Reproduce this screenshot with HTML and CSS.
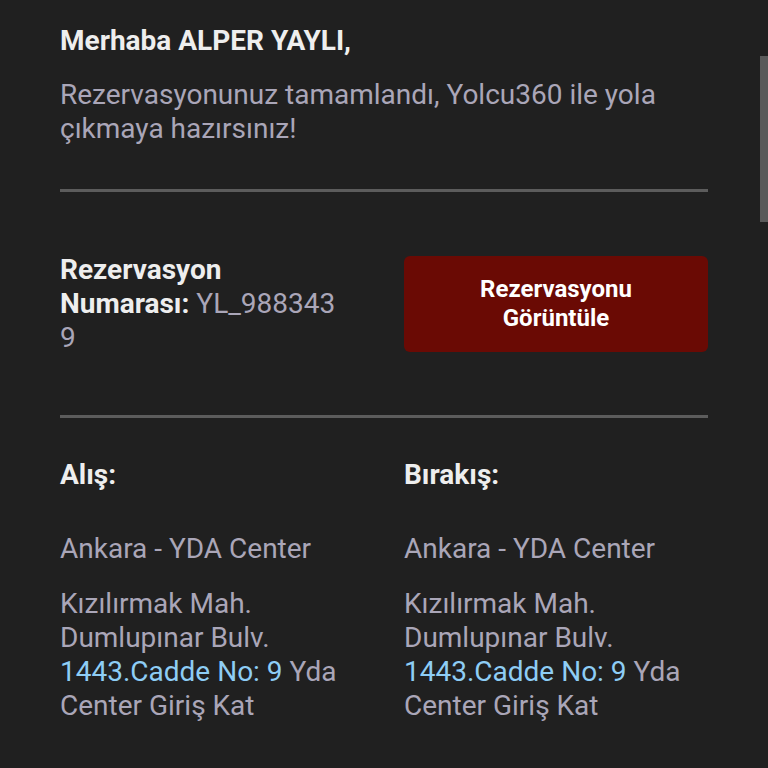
FILE: index.html
```html
<!DOCTYPE html>
<html lang="tr">

<head>
  <meta charset="UTF-8">
  <meta name="viewport" content="width=device-width, initial-scale=1.0">
  <title>Rezervasyon</title>
  <link rel="stylesheet" href="styles.css">
</head>

<body>
  <div class="scrollbar"></div>
  <div class="mail">
    <div class="greeting">
      <h1>Merhaba ALPER YAYLI,</h1>
      <p>Rezervasyonunuz tamamlandı, Yolcu360 ile yola çıkmaya hazırsınız!</p>
    </div>

    <hr class="line">

    <div class="booking">
      <div class="booking-no">
        <b>Rezervasyon Numarası:</b> <span class="code">YL_9883439</span>
      </div>
      <a class="view-btn" href="#">Rezervasyonu<br>Görüntüle</a>
    </div>

    <hr class="line">

    <div class="places">
      <div class="place">
        <h2>Alış:</h2>
        <p>Ankara - YDA Center</p>
        <p>Kızılırmak Mah. Dumlupınar Bulv. <span class="link">1443.Cadde No: 9</span> Yda Center Giriş Kat</p>
      </div>
      <div class="place">
        <h2>Bırakış:</h2>
        <p>Ankara - YDA Center</p>
        <p>Kızılırmak Mah. Dumlupınar Bulv. <span class="link">1443.Cadde No: 9</span> Yda Center Giriş Kat</p>
      </div>
    </div>
  </div>
</body>

</html>
```

FILE: styles.css
```css
* {
  margin: 0;
  padding: 0;
  box-sizing: border-box;
}

html,
body {
  background-color: #202020;
  font-family: Roboto, "Liberation Sans", sans-serif;
  font-size: 28px;
  line-height: 34px;
  color: #aaa6b8;
  overflow: hidden;
}

.scrollbar {
  position: fixed;
  top: 56px;
  right: 0;
  width: 8px;
  height: 166px;
  background-color: #5a5a5a;
}

.mail {
  width: 648px;
  margin-left: 60px;
  padding-top: 24px;
}

.greeting h1 {
  font-size: 28px;
  font-weight: bold;
  color: #eeeeee;
  margin-bottom: 20px;
}

.greeting p {
  margin-bottom: 43px;
}

.line {
  border: none;
  height: 3px;
  background-color: #5c5c5c;
}

.booking {
  display: grid;
  grid-template-columns: 1fr 1fr;
  column-gap: 40px;
  align-items: center;
  padding: 61px 0 60px;
}

.booking-no {
  padding-right: 22px;
}

.booking-no b {
  color: #eeeeee;
}

.booking-no .code {
  word-break: break-all;
}

.view-btn {
  display: flex;
  align-items: center;
  justify-content: center;
  height: 96px;
  background-color: #6a0a04;
  border-radius: 6px;
  color: #fff;
  font-size: 24px;
  font-weight: bold;
  line-height: 29px;
  text-align: center;
  text-decoration: none;
}

.places {
  display: grid;
  grid-template-columns: 1fr 1fr;
  column-gap: 40px;
  padding-top: 40px;
}

.place h2 {
  font-size: 28px;
  font-weight: bold;
  color: #eeeeee;
  margin-bottom: 40px;
}

.place p {
  margin-bottom: 21px;
}

.link {
  color: #8ecdf5;
}
```
